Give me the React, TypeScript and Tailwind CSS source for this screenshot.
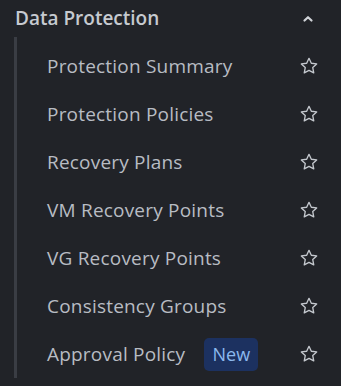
import React from 'react';

const items = [
  'Protection Summary',
  'Protection Policies',
  'Recovery Plans',
  'VM Recovery Points',
  'VG Recovery Points',
  'Consistency Groups',
  'Approval Policy',
];

const Star: React.FC = () => (
  <svg width="20" height="20" viewBox="0 0 24 24" fill="none" stroke="#c4c8ce" strokeWidth="1.6" strokeLinejoin="round">
    <path d="M12 2.8l2.8 5.9 6.4.8-4.7 4.4 1.2 6.4L12 17.2l-5.7 3.1 1.2-6.4-4.7-4.4 6.4-.8z" />
  </svg>
);

const App: React.FC = () => {
  return (
    <div className="w-[341px] h-[386px] bg-[#212328] overflow-hidden" style={{ fontFamily: '"Open Sans", sans-serif' }}>
      {/* Section header */}
      <div className="flex items-center justify-between h-[37px] pl-[15px] pr-[27px]">
        <span className="text-[19px] font-semibold text-[#c6cad0]">Data Protection</span>
        <svg width="12" height="12" viewBox="0 0 12 12" fill="none" stroke="#d0d3d8" strokeWidth="2.2" strokeLinecap="round" strokeLinejoin="round">
          <path d="M2.5 7.5L6 4.2l3.5 3.3" />
        </svg>
      </div>

      {/* Items */}
      <div className="ml-[14px] border-l-[3px] border-[#3a3d44] pt-[5px]">
        {items.map((item) => (
          <div key={item} className="flex items-center justify-between h-[48px] pl-[30px] pr-[22px]">
            <div className="flex items-center">
              <span className="text-[19px] tracking-[0.2px] text-[#b8bcc3]">{item}</span>
              {item === 'Approval Policy' && (
                <span className="ml-[19px] h-[33px] w-[54px] flex items-center justify-center rounded-[5px] bg-[#1c3160] text-[18px] text-[#8cb9ee]">
                  New
                </span>
              )}
            </div>
            <Star />
          </div>
        ))}
      </div>
    </div>
  );
};

export default App;
